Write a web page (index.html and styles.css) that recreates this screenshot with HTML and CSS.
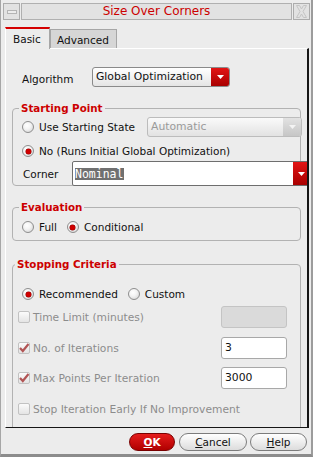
FILE: index.html
```html
<!DOCTYPE html>
<html>
<head>
<meta charset="utf-8">
<title>Size Over Corners</title>
<link rel="stylesheet" href="styles.css">
</head>
<body>
<div class="window">
  <div class="titlebar">
    <div class="tb-btn"><span class="min-icon"></span></div>
    <div class="tb-title">Size Over Corners</div>
    <div class="tb-btn">
      <svg width="11" height="13" viewBox="0 0 11 13"><path d="M0.5 0.5 H3.5 L5.5 4 L7.5 0.5 H10.5 L7 6.5 L10.5 12.5 H7.5 L5.5 9 L3.5 12.5 H0.5 L4 6.5 Z" fill="none" stroke="#c4c4c4" stroke-width="1"/></svg>
    </div>
  </div>

  <div class="tabs">
    <div class="tab active">Basic</div>
    <div class="tab">Advanced</div>
  </div>

  <div class="pane">
    <div class="algo-row">
      <span class="algo-label">Algorithm</span>
      <div class="combo algo-combo">
        <span class="combo-text">Global Optimization</span>
        <span class="combo-btn red"><svg width="7" height="4" viewBox="0 0 7 4"><polygon points="0,0 7,0 3.5,4" fill="#fff"/></svg></span>
      </div>
    </div>

    <fieldset class="group sp">
      <legend>Starting Point</legend>
      <div class="row sp-r1">
        <label class="radio"><span class="rb"></span>Use Starting State</label>
        <div class="combo dis auto-combo">
          <span class="combo-text">Automatic</span>
          <span class="combo-btn gray"><svg width="7" height="4" viewBox="0 0 7 4"><polygon points="0,0 7,0 3.5,4" fill="#f4f4f4"/></svg></span>
        </div>
      </div>
      <div class="row sp-r2">
        <label class="radio"><span class="rb on"></span>No (Runs Initial Global Optimization)</label>
      </div>
      <div class="row sp-r3">
        <span class="corner-label">Corner</span>
        <div class="combo corner-combo">
          <span class="corner-text"><span class="sel">Nominal</span></span>
          <span class="combo-btn red"><svg width="7" height="4" viewBox="0 0 7 4"><polygon points="0,0 7,0 3.5,4" fill="#fff"/></svg></span>
        </div>
      </div>
    </fieldset>

    <fieldset class="group ev">
      <legend>Evaluation</legend>
      <div class="row ev-row">
        <label class="radio"><span class="rb"></span>Full</label>
        <label class="radio"><span class="rb on"></span>Conditional</label>
      </div>
    </fieldset>

    <fieldset class="group sc">
      <legend>Stopping Criteria</legend>
      <div class="row sc-radios">
        <label class="radio"><span class="rb on"></span>Recommended</label>
        <label class="radio"><span class="rb"></span>Custom</label>
      </div>
      <div class="row chk-row time-row">
        <span class="cb"></span><span class="chk-text">Time Limit (minutes)</span>
        <span class="field dis"></span>
      </div>
      <div class="row chk-row iter-row">
        <span class="cb"><svg width="12" height="12" viewBox="0 0 12 12"><path d="M2 6 L4.8 9 L10.5 2" fill="none" stroke="#b25555" stroke-width="2.2"/></svg></span><span class="chk-text">No. of Iterations</span>
        <span class="field">3</span>
      </div>
      <div class="row chk-row max-row">
        <span class="cb"><svg width="12" height="12" viewBox="0 0 12 12"><path d="M2 6 L4.8 9 L10.5 2" fill="none" stroke="#b25555" stroke-width="2.2"/></svg></span><span class="chk-text">Max Points Per Iteration</span>
        <span class="field">3000</span>
      </div>
      <div class="row chk-row stop-row">
        <span class="cb"></span><span class="chk-text">Stop Iteration Early If No Improvement</span>
      </div>
    </fieldset>
  </div>

  <div class="buttons">
    <button class="btn ok"><u>O</u>K</button>
    <button class="btn cancel"><u>C</u>ancel</button>
    <button class="btn help"><u>H</u>elp</button>
  </div>
</div>
</body>
</html>
```

FILE: styles.css
```css
* { box-sizing: border-box; }
html, body { margin: 0; padding: 0; }
body {
  width: 313px;
  height: 457px;
  overflow: hidden;
  font-family: "DejaVu Sans", sans-serif;
  font-size: 10.5px;
  color: #111;
  background: #ececec;
}
.window {
  width: 313px;
  height: 457px;
  border-left: 1px solid #a6a6a6;
  border-right: 2px solid #9c9c9c;
  border-bottom: 3px solid #8c8c8c;
  background: #ececec;
  display: flex;
  flex-direction: column;
}

/* title bar */
.titlebar {
  display: flex;
  height: 17px;
  margin: 3px 1px 0 2px;
  gap: 1px;
}
.tb-btn {
  width: 17px;
  height: 17px;
  border: 1px solid #acacac;
  background: #e2e2e2;
  display: flex;
  align-items: center;
  justify-content: center;
}
.min-icon {
  width: 10px;
  height: 4px;
  border: 1px solid #b4b4b4;
  background: #ececec;
}
.tb-title {
  flex: 1;
  border: 1px solid #b0b0b0;
  background: #e2e2e2;
  color: #cc0000;
  font-size: 12px;
  text-align: center;
  line-height: 15px;
}

/* tabs */
.tabs {
  display: flex;
  height: 21px;
  margin-top: 7px;
  padding-left: 4px;
  align-items: flex-start;
}
.tab {
  height: 20px;
  margin-top: 2px;
  width: 67px;
  padding-left: 6px;
  line-height: 20px;
  border: 1px solid #a6a6a6;
  border-bottom: none;
  background: #d6d6d6;
  color: #111;
}
.tab.active {
  position: relative;
  z-index: 1;
  margin-top: 0;
  width: 45px;
  height: 22px;
  padding-left: 7px;
  line-height: 21px;
  border: none;
  border-top: 2px solid #d40000;
  border-left: 1px solid #ffffff;
  border-right: 1px solid #a6a6a6;
  background: #ececec;
}

/* pane */
.pane {
  margin-left: 4px;
  width: 304px;
  height: 380px;
  border-top: 1px solid #ffffff;
  border-left: 1px solid #ffffff;
  border-right: 2px solid #161616;
  border-bottom: 1px solid #161616;
  overflow: hidden;
  padding-top: 18px;
}
.algo-row {
  display: flex;
  height: 20px;
  padding-left: 16px;
}
.algo-label {
  width: 70px;
  flex: none;
  padding-top: 6px;
}

.combo {
  display: flex;
  height: 20px;
  border: 1px solid #8a8a8a;
  border-radius: 3px;
  background: linear-gradient(#ffffff, #e4e4e4);
  overflow: hidden;
}
.combo-text {
  flex: 1;
  padding-left: 3px;
  line-height: 17px;
  font-size: 10.8px;
}
.combo-btn {
  width: 18px;
  display: flex;
  align-items: center;
  justify-content: center;
}
.combo-btn.red {
  background: linear-gradient(#e21414, #a80000);
}
.combo-btn.gray {
  background: linear-gradient(#e2e2e2, #c6c6c6);
}
.algo-combo { width: 138px; flex: none; }

.combo.dis {
  border-color: #bcbcbc;
  color: #9a9a9a;
  background: linear-gradient(#fafafa, #e2e2e2);
}

/* groups */
.group {
  margin: 15px 6px 0 6px;
  padding: 3px 0 0 9px;
  border: 1px solid #b2b2b2;
  border-radius: 4px;
  min-width: 0;
}
.group legend {
  color: #cc0000;
  font-weight: bold;
  font-size: 10.3px;
  padding: 0 2px;
  margin-left: -3px;
  line-height: 12px;
}
.row {
  display: flex;
  align-items: center;
  height: 20px;
}
.radio {
  display: flex;
  align-items: center;
  gap: 5px;
  flex: none;
}
.rb {
  width: 12px;
  height: 12px;
  flex: none;
  border-radius: 50%;
  border: 1px solid #8e8e8e;
  background: radial-gradient(circle at 40% 35%, #ffffff 0%, #f4f4f4 40%, #cfcfcf 100%);
  display: flex;
  align-items: center;
  justify-content: center;
}
.rb.on::after {
  content: "";
  width: 5px;
  height: 5px;
  border-radius: 50%;
  background: #d00000;
  box-shadow: 0 0 0 0.5px #900000;
}

.sp-r1 { margin-top: 0; }
.auto-combo {
  margin-left: auto;
  width: 155px;
  flex: none;
  margin-right: -2px;
}
.sp-r2 { margin-top: 4px; }
.sp-r3 {
  height: 25px;
  margin-bottom: -1px;
}
.corner-label {
  width: 50px;
  flex: none;
  padding-left: 1px;
}
.corner-combo {
  width: 239px;
  height: 25px;
  flex: none;
  border-color: #6e6e6e;
  border-radius: 2px;
  background: #ffffff;
}
.corner-text {
  flex: 1;
  display: flex;
  align-items: center;
  padding-left: 2px;
}
.sel {
  background: #707070;
  color: #ffffff;
  font-family: "DejaVu Sans Mono", monospace;
  font-size: 11.5px;
  line-height: 12px;
  padding: 0 1px 0 0;
}
.corner-combo .combo-btn { width: 17px; }

.ev {
  padding: 4px 0 3px 9px;
}
.ev-row { gap: 10px; }

.sc {
  margin-top: 17px;
  padding: 14px 0 20px 5px;
}
.sc-radios {
  padding-left: 4px;
  gap: 10px;
}
.chk-row {
  height: 22px;
  color: #8c8c8c;
}
.chk-text {
  font-size: 10.7px;
  white-space: nowrap;
}
.cb {
  width: 12px;
  height: 12px;
  flex: none;
  border: 1px solid #c2c2c2;
  border-radius: 2px;
  background: linear-gradient(#fbfbfb, #e4e4e4);
  margin-right: 3px;
  display: flex;
  align-items: center;
  justify-content: center;
  overflow: visible;
}
.cb svg { flex: none; }
.field {
  margin-left: auto;
  margin-right: 13px;
  width: 66px;
  height: 22px;
  flex: none;
  border: 1px solid #a8a8a8;
  border-radius: 3px;
  background: #ffffff;
  color: #111;
  padding-left: 3px;
  line-height: 20px;
  font-size: 10.8px;
}
.field.dis {
  background: #dadada;
  border-color: #c4c4c4;
}
.time-row { margin-top: 2px; }
.iter-row { margin-top: 9px; }
.max-row { margin-top: 8px; }
.stop-row { margin-top: 10px; height: 20px; }

/* buttons */
.buttons {
  display: flex;
  justify-content: flex-end;
  margin-top: 5px;
  padding-right: 4px;
  gap: 4px;
}
.btn {
  height: 18px;
  border: 1px solid #7c7c7c;
  border-radius: 9px;
  background: linear-gradient(#ffffff, #dcdcdc);
  font-family: "DejaVu Sans", sans-serif;
  font-size: 10.5px;
  color: #111;
  padding: 0;
  line-height: 16px;
}
.btn u { text-underline-offset: 1px; }
.ok {
  width: 46px;
  border-color: #7a0000;
  background: linear-gradient(#e51c1c, #b00000);
  color: #ffffff;
  font-weight: bold;
}
.cancel { width: 68px; }
.help { width: 57px; margin-left: -1px; }
```
